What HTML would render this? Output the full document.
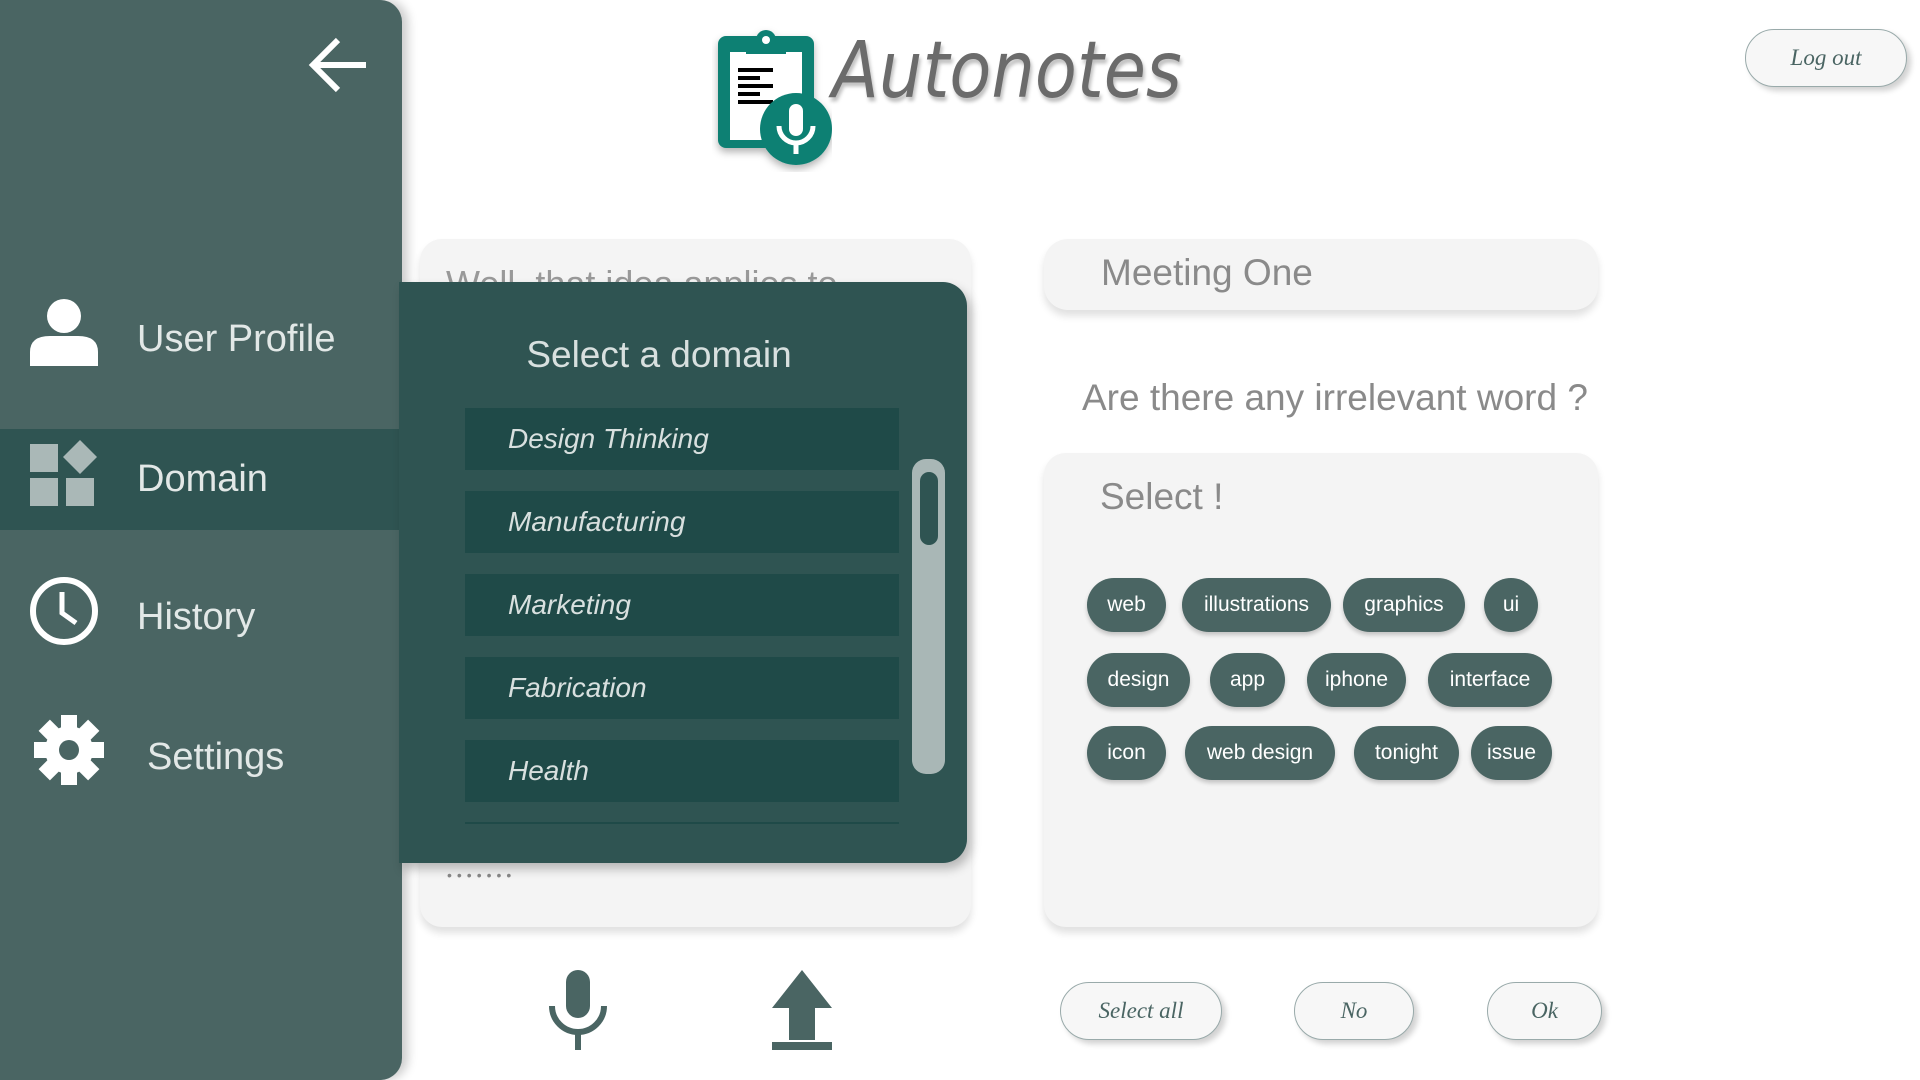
<!DOCTYPE html>
<html><head><meta charset="utf-8"><style>
*{margin:0;padding:0;box-sizing:border-box}
body{width:1920px;height:1080px;background:#fff;position:relative;overflow:hidden;font-family:"Liberation Sans",sans-serif}
.abs{position:absolute}
.card{background:#f4f4f4;border-radius:22px;box-shadow:0 6px 8px rgba(0,0,0,.12)}
.chip{position:absolute;height:54px;border-radius:27px;background:#4a6563;color:#fff;font-size:21px;line-height:54px;text-align:center;box-shadow:0 3px 4px rgba(0,0,0,.2)}
.btn{position:absolute;height:58px;border:1.5px solid #9aa;border-radius:29px;background:#f7f7f7;color:#4a6563;font-family:"Liberation Serif",serif;font-style:italic;font-size:23px;line-height:55px;text-align:center;box-shadow:4px 4px 6px rgba(0,0,0,.18)}
.side{color:#e2e8e7;font-size:38px;position:absolute;left:137px}
.item{position:absolute;left:465px;width:434px;height:62px;background:#1f4a48;color:#d8e0df;font-style:italic;font-size:28px;line-height:62px;padding-left:43px}
</style></head><body>
<svg class="abs" style="left:712px;top:22px" width="120" height="150" viewBox="0 0 120 150">
<defs><filter id="s"><feDropShadow dx="0" dy="4" stdDeviation="4" flood-opacity=".3"/></filter></defs>
<g filter="url(#s)">
<rect x="6" y="14" width="96" height="112" rx="8" fill="#0f8073"/>
<rect x="18" y="30" width="72" height="88" fill="#fff"/>
<path d="M34 14h40v18H34z" fill="#0f8073"/><circle cx="54" cy="18" r="10" fill="#0f8073"/><circle cx="54" cy="18" r="4" fill="#fff"/>
<g fill="#000"><rect x="26" y="46" width="35" height="4"/><rect x="26" y="54" width="22" height="4"/><rect x="26" y="62" width="35" height="4"/><rect x="26" y="70" width="22" height="4"/><rect x="26" y="78" width="35" height="4"/></g>
<circle cx="84" cy="107" r="36" fill="#0f8073"/>
<rect x="77" y="82" width="14" height="32" rx="7" fill="#fff"/>
<path d="M67 104a17 17 0 0 0 34 0" stroke="#fff" stroke-width="5" fill="none"/><rect x="81.5" y="120" width="5" height="12" fill="#fff"/>
</g></svg>
<div class="abs" style="left:832px;top:26px;font-size:78px;font-style:italic;color:#6b6b6b;font-family:'DejaVu Sans',sans-serif;text-shadow:2px 4px 4px rgba(0,0,0,.25);transform:scaleX(0.88);transform-origin:0 0">Autonotes</div>
<div class="btn" style="left:1745px;top:29px;width:162px">Log out</div>

<div class="card abs" style="left:420px;top:239px;width:551px;height:688px;overflow:hidden">
<div class="abs" style="left:26px;top:24px;font-size:36px;color:#999">Well, that idea applies to</div>
<div class="abs" style="left:27px;top:628px;font-size:14px;color:#888;letter-spacing:5px">•••••••</div></div>

<div class="abs" style="left:0;top:0;width:402px;height:1080px;background:#4a6563;border-radius:0 22px 22px 0;box-shadow:6px 0 10px rgba(0,0,0,.2)"></div>
<div class="abs" style="left:0;top:429px;width:402px;height:101px;background:#2f5452"></div>
<svg class="abs" style="left:308px;top:36px" width="62" height="58" viewBox="0 0 62 58"><path d="M58 29H6M30 4L5 29l25 25" stroke="#fff" stroke-width="6" fill="none"/></svg>
<svg class="abs" style="left:30px;top:298px" width="68" height="68" viewBox="0 0 68 68"><circle cx="34" cy="18" r="17" fill="#fff"/><path d="M0 68v-14q0-16 20-16h28q20 0 20 16v14z" fill="#fff"/></svg>
<div class="side" style="top:318px">User Profile</div>
<svg class="abs" style="left:30px;top:440px" width="68" height="66" viewBox="0 0 68 66"><g fill="#aab8b7"><rect x="0" y="4" width="28" height="28"/><rect x="0" y="38" width="28" height="28"/><rect x="36" y="38" width="28" height="28"/><path d="M50 0l17 17-17 17-17-17z"/></g></svg>
<div class="side" style="top:458px">Domain</div>
<svg class="abs" style="left:29px;top:576px" width="70" height="70" viewBox="0 0 70 70"><circle cx="35" cy="35" r="31" stroke="#fff" stroke-width="6" fill="none"/><path d="M33 16v21l14 10" stroke="#fff" stroke-width="5" fill="none"/></svg>
<div class="side" style="top:596px">History</div>
<svg class="abs" style="left:34px;top:715px" width="70" height="70" viewBox="-35 -35 70 70"><g fill="#fff"><circle r="24"/><g id="t"><rect x="-8" y="-35" width="16" height="16"/></g><use href="#t" transform="rotate(45)"/><use href="#t" transform="rotate(90)"/><use href="#t" transform="rotate(135)"/><use href="#t" transform="rotate(180)"/><use href="#t" transform="rotate(225)"/><use href="#t" transform="rotate(270)"/><use href="#t" transform="rotate(315)"/></g><circle r="10" fill="#4a6563"/></svg>
<div class="side" style="left:147px;top:736px">Settings</div>

<div class="abs" style="left:399px;top:282px;width:568px;height:581px;background:#2f5452;border-radius:0 24px 24px 0;box-shadow:4px 6px 10px rgba(0,0,0,.25)"></div>
<div class="abs" style="left:399px;top:334px;width:520px;text-align:center;font-size:37px;color:#d8e0df">Select a domain</div>
<div class="item" style="top:408px">Design Thinking</div>
<div class="item" style="top:491px">Manufacturing</div>
<div class="item" style="top:574px">Marketing</div>
<div class="item" style="top:657px">Fabrication</div>
<div class="item" style="top:740px">Health</div>
<div class="abs" style="left:465px;top:822px;width:434px;height:2px;background:#1f4a48"></div>
<div class="abs" style="left:912px;top:459px;width:33px;height:315px;background:#a9b7b6;border-radius:14px"></div>
<div class="abs" style="left:920px;top:472px;width:18px;height:73px;background:#2f5452;border-radius:9px"></div>

<svg class="abs" style="left:547px;top:970px" width="62" height="80" viewBox="0 0 62 80"><rect x="19" y="0" width="24" height="48" rx="12" fill="#4a6563"/><path d="M5 36a26 26 0 0 0 52 0" stroke="#4a6563" stroke-width="6" fill="none"/><rect x="28" y="60" width="6" height="20" fill="#4a6563"/></svg>
<svg class="abs" style="left:771px;top:970px" width="62" height="80" viewBox="0 0 62 80"><path d="M31 0L61 38H44v32H18V38H1z" fill="#4a6563"/><rect x="1" y="72" width="60" height="8" fill="#4a6563"/></svg>

<div class="card abs" style="left:1044px;top:239px;width:554px;height:71px;border-radius:24px"></div>
<div class="abs" style="left:1101px;top:252px;font-size:37px;color:#8a8a8a">Meeting One</div>
<div class="abs" style="left:1082px;top:377px;font-size:37px;color:#8a8a8a">Are there any irrelevant word ?</div>
<div class="card abs" style="left:1044px;top:453px;width:554px;height:474px"></div>
<div class="abs" style="left:1100px;top:476px;font-size:37px;color:#8a8a8a">Select !</div>
<div class="chip" style="left:1087px;top:578px;width:79px">web</div>
<div class="chip" style="left:1182px;top:578px;width:149px">illustrations</div>
<div class="chip" style="left:1343px;top:578px;width:122px">graphics</div>
<div class="chip" style="left:1484px;top:578px;width:54px">ui</div>
<div class="chip" style="left:1087px;top:653px;width:103px">design</div>
<div class="chip" style="left:1210px;top:653px;width:75px">app</div>
<div class="chip" style="left:1307px;top:653px;width:99px">iphone</div>
<div class="chip" style="left:1428px;top:653px;width:124px">interface</div>
<div class="chip" style="left:1087px;top:726px;width:79px">icon</div>
<div class="chip" style="left:1185px;top:726px;width:150px">web design</div>
<div class="chip" style="left:1354px;top:726px;width:105px">tonight</div>
<div class="chip" style="left:1471px;top:726px;width:81px">issue</div>
<div class="btn" style="left:1060px;top:982px;width:162px">Select all</div>
<div class="btn" style="left:1294px;top:982px;width:120px">No</div>
<div class="btn" style="left:1487px;top:982px;width:115px">Ok</div>
</body></html>
